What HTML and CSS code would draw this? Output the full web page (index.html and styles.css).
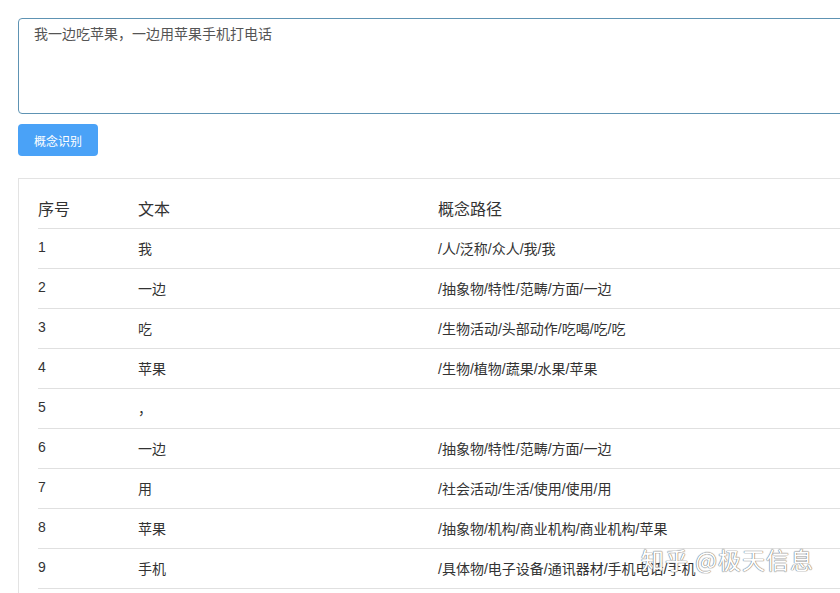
FILE: index.html
```html
<!DOCTYPE html>
<html lang="zh-CN">
<head>
  <meta charset="UTF-8" />
  <meta name="viewport" content="width=device-width, initial-scale=1.0" />
  <title>概念识别</title>
  <link rel="stylesheet" href="styles.css">
</head>
<body>

  <div class="page">
    <textarea class="input-box">我一边吃苹果，一边用苹果手机打电话</textarea>
    <button class="btn-primary">概念识别</button>

    <div class="card">
      <table class="result-table">
        <thead>
          <tr>
            <th class="col-index">序号</th>
            <th class="col-text">文本</th>
            <th>概念路径</th>
          </tr>
        </thead>
        <tbody>
          <tr><td class="num">1</td><td>我</td><td>/人/泛称/众人/我/我</td></tr>
          <tr><td class="num">2</td><td>一边</td><td>/抽象物/特性/范畴/方面/一边</td></tr>
          <tr><td class="num">3</td><td>吃</td><td>/生物活动/头部动作/吃喝/吃/吃</td></tr>
          <tr><td class="num">4</td><td>苹果</td><td>/生物/植物/蔬果/水果/苹果</td></tr>
          <tr><td class="num">5</td><td>，</td><td></td></tr>
          <tr><td class="num">6</td><td>一边</td><td>/抽象物/特性/范畴/方面/一边</td></tr>
          <tr><td class="num">7</td><td>用</td><td>/社会活动/生活/使用/使用/用</td></tr>
          <tr><td class="num">8</td><td>苹果</td><td>/抽象物/机构/商业机构/商业机构/苹果</td></tr>
          <tr><td class="num">9</td><td>手机</td><td>/具体物/电子设备/通讯器材/手机电话/手机</td></tr>
        </tbody>
      </table>
    </div>
  </div>

  <div class="watermark">知乎 @极天信息</div>

</body>
</html>
```

FILE: styles.css
```css
* {
  box-sizing: border-box;
}
body {
  margin: 0;
  padding: 18px;
  background: #fff;
  font-family: "Liberation Sans", "Noto Sans CJK SC", sans-serif;
  color: #333;
  overflow: hidden;
  height: 100vh;
}
.page {
  width: 1100px;
}
.input-box {
  display: block;
  width: 100%;
  height: 96px;
  padding: 4px 15px;
  border: 1px solid #5e93b3;
  border-radius: 4px;
  font-family: "Noto Sans CJK SC", sans-serif;
  font-size: 14px;
  line-height: 20px;
  color: #555;
  resize: none;
  outline: none;
}
.btn-primary {
  display: block;
  margin-top: 10px;
  width: 80px;
  height: 32px;
  border: none;
  border-radius: 4px;
  background: #4aa2f7;
  color: #fff;
  font-family: "Noto Sans CJK SC", sans-serif;
  font-size: 12px;
  cursor: pointer;
}
.card {
  margin-top: 22px;
  border: 1px solid #e3e3e3;
  border-bottom: none;
  padding: 9px 19px 0;
  height: 415px;
}
.result-table {
  width: 100%;
  border-collapse: collapse;
  font-family: "Liberation Sans", "Noto Sans CJK SC", sans-serif;
}
.result-table th {
  text-align: left;
  font-weight: normal;
  font-family: "Noto Sans CJK SC", sans-serif;
  font-size: 16px;
  color: #333;
  height: 40px;
  padding: 0;
  border-bottom: 1px solid #e0e0e0;
}
.result-table td {
  height: 40px;
  padding: 0;
  font-size: 14px;
  color: #333;
  border-bottom: 1px solid #e0e0e0;
}
.result-table .num {
  padding-bottom: 2px;
}
.col-index {
  width: 100px;
}
.col-text {
  width: 300px;
}
.watermark {
  position: absolute;
  left: 641px;
  top: 542px;
  font-family: "Noto Sans CJK SC", sans-serif;
  font-size: 23px;
  color: #fff;
  letter-spacing: 1px;
  text-shadow: 0 0 1px #777, 0 0 1px #777, 0 0 1px #999;
}
```
